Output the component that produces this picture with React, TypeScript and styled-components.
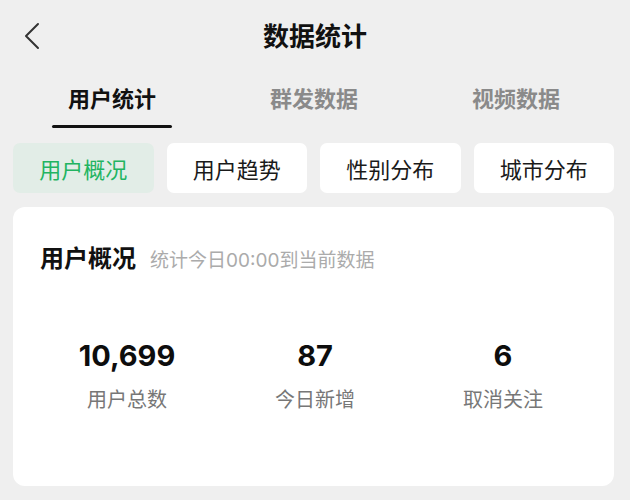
import * as React from "react";
import styled, { createGlobalStyle } from "styled-components";

const GlobalStyle = createGlobalStyle`
  html, body {
    margin: 0;
    padding: 0;
    background: #efefef;
  }
  body {
    font-family: "Liberation Sans", "Noto Sans CJK SC", sans-serif;
    color: #111;
  }
`;

const Page = styled.div`
  width: 630px;
  height: 500px;
  overflow: hidden;
  background: #efefef;
`;

const Header = styled.div`
  display: grid;
  grid-template-columns: 60px 1fr 60px;
  align-items: center;
  height: 72px;
`;

const BackButton = styled.div`
  display: flex;
  align-items: center;
  padding-left: 22px;
  color: #333;
`;

const Title = styled.h1`
  margin: 0 0 4px;
  text-align: center;
  font-size: 26px;
  font-weight: 700;
  color: #111;
`;

const TabBar = styled.div`
  display: grid;
  grid-template-columns: repeat(3, 1fr);
  padding: 0 13px 0 11px;
`;

const Tab = styled.div<{ $active?: boolean }>`
  display: flex;
  flex-direction: column;
  align-items: center;
  padding-top: 13px;
  font-size: 22px;
  line-height: 30px;
  font-weight: 700;
  color: ${(p) => (p.$active ? "#111" : "#8a8a8a")};
`;

const Underline = styled.div<{ $active?: boolean }>`
  width: 120px;
  height: 3px;
  margin-top: 10px;
  border-radius: 2px;
  background: ${(p) => (p.$active ? "#111" : "transparent")};
`;

const ChipRow = styled.div`
  display: grid;
  grid-template-columns: repeat(4, 1fr);
  gap: 13px;
  padding: 15px 16px 0 13px;
`;

const Chip = styled.div<{ $active?: boolean }>`
  display: flex;
  align-items: center;
  justify-content: center;
  height: 50px;
  border-radius: 7px;
  font-size: 22px;
  background: ${(p) => (p.$active ? "#e2ede7" : "#fff")};
  color: ${(p) => (p.$active ? "#22b461" : "#1a1a1a")};
`;

const Card = styled.div`
  margin: 14px 16px 0 13px;
  height: 279px;
  background: #fff;
  border-radius: 12px;
  box-sizing: border-box;
`;

const CardHeader = styled.div`
  display: flex;
  align-items: baseline;
  gap: 14px;
  padding: 38px 27px 0;
  line-height: 28px;
`;

const CardTitle = styled.span`
  font-size: 24px;
  font-weight: 700;
  color: #111;
`;

const CardHint = styled.span`
  font-family: "Inter", "Noto Sans CJK SC", sans-serif;
  font-size: 19px;
  color: #ababab;
`;

const Stats = styled.div`
  display: grid;
  grid-template-columns: repeat(3, 1fr);
  padding: 63px 17px 0 20px;
`;

const Stat = styled.div`
  display: flex;
  flex-direction: column;
  align-items: center;
`;

const StatValue = styled.div`
  font-family: "Inter", sans-serif;
  font-size: 29px;
  line-height: 36px;
  font-weight: 700;
  color: #0d0d0d;
`;

const StatLabel = styled.div`
  margin-top: 13px;
  font-size: 20px;
  line-height: 26px;
  color: #777;
`;

const tabs = ["用户统计", "群发数据", "视频数据"];
const chips = ["用户概况", "用户趋势", "性别分布", "城市分布"];
const stats = [
  { value: "10,699", label: "用户总数" },
  { value: "87", label: "今日新增" },
  { value: "6", label: "取消关注" },
];

export default function App() {
  return (
    <Page>
      <GlobalStyle />
      <Header>
        <BackButton>
          <svg width="20" height="28" viewBox="0 0 20 28" fill="none">
            <path d="M16 2 L4 14 L16 26" stroke="currentColor" strokeWidth="2" strokeLinecap="round" strokeLinejoin="round" />
          </svg>
        </BackButton>
        <Title>数据统计</Title>
        <div />
      </Header>
      <TabBar>
        {tabs.map((t, i) => (
          <Tab key={t} $active={i === 0}>
            {t}
            <Underline $active={i === 0} />
          </Tab>
        ))}
      </TabBar>
      <ChipRow>
        {chips.map((c, i) => (
          <Chip key={c} $active={i === 0}>
            {c}
          </Chip>
        ))}
      </ChipRow>
      <Card>
        <CardHeader>
          <CardTitle>用户概况</CardTitle>
          <CardHint>统计今日00:00到当前数据</CardHint>
        </CardHeader>
        <Stats>
          {stats.map((s) => (
            <Stat key={s.label}>
              <StatValue>{s.value}</StatValue>
              <StatLabel>{s.label}</StatLabel>
            </Stat>
          ))}
        </Stats>
      </Card>
    </Page>
  );
}
